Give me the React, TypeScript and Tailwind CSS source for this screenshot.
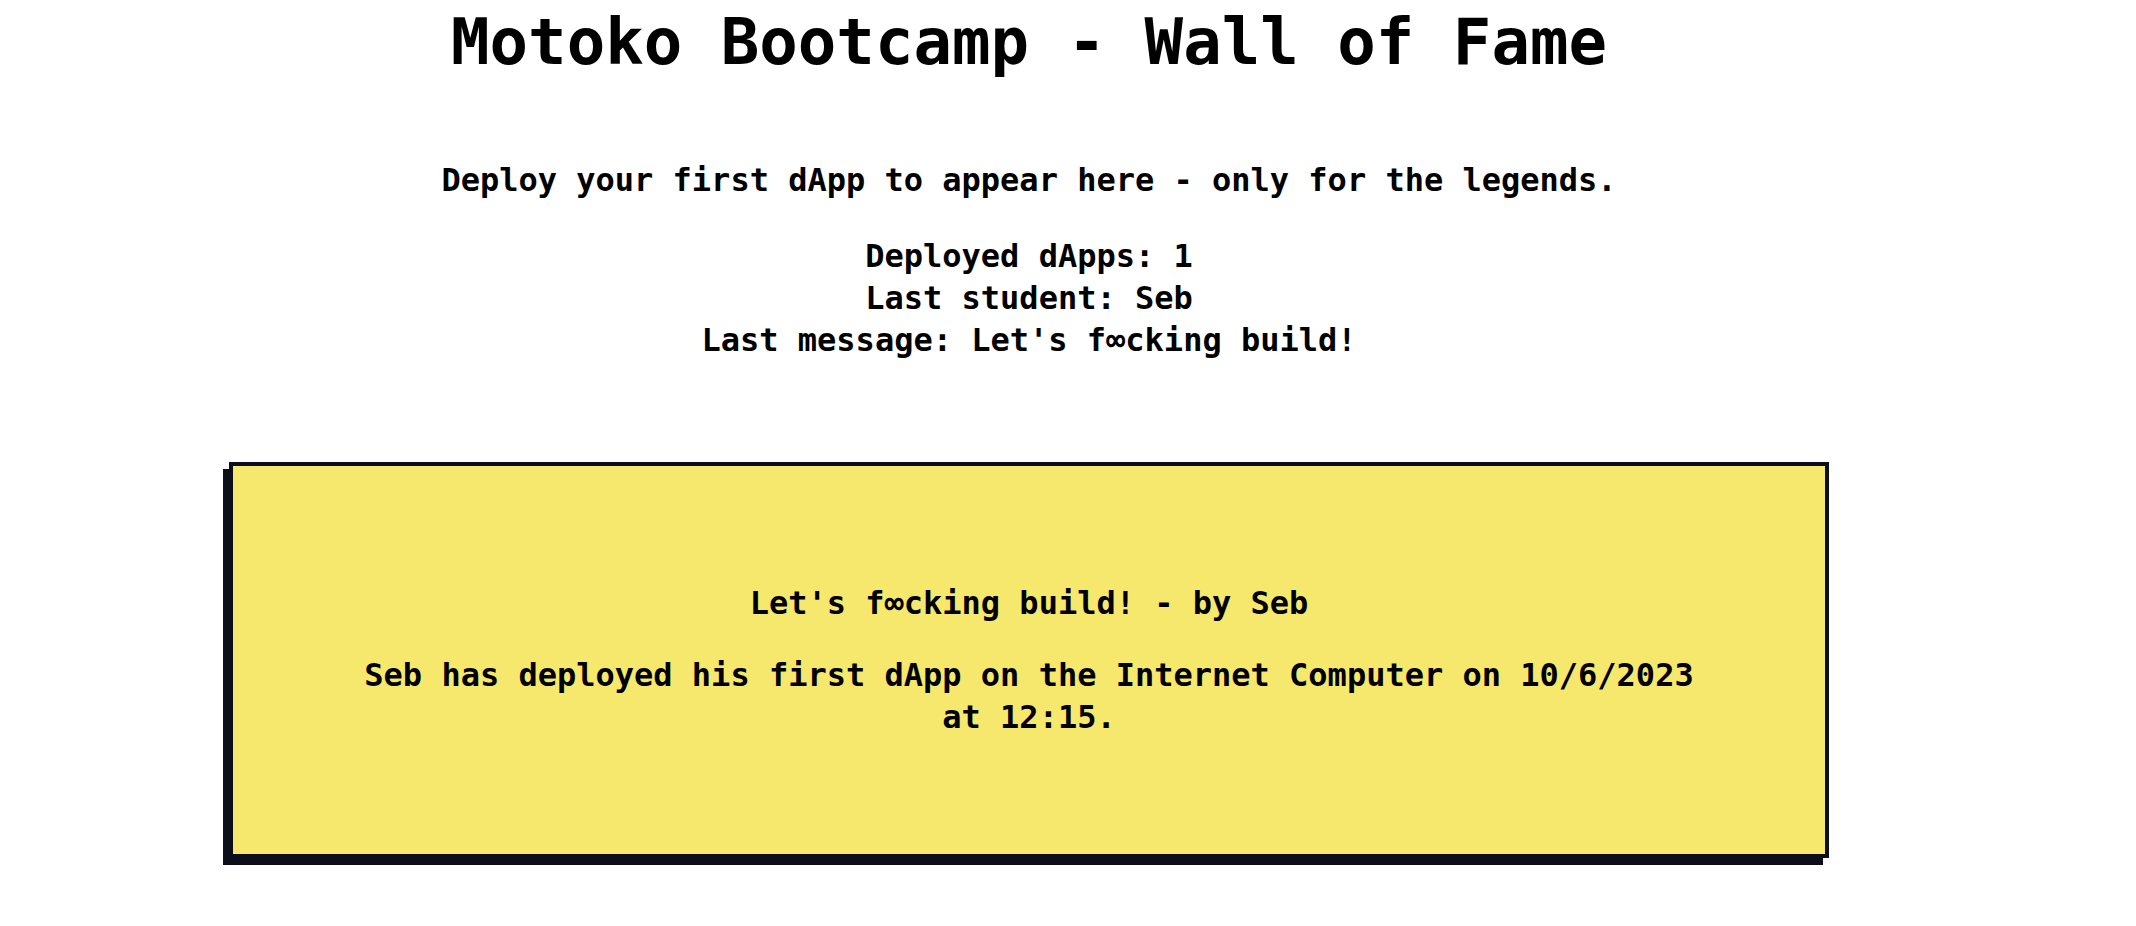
const stats = [
  { label: "Deployed dApps", value: "1" },
  { label: "Last student", value: "Seb" },
  { label: "Last message", value: "Let's f∞cking build!" },
]

export default function App() {
  return (
    <div className="min-h-screen bg-white font-['DejaVu_Sans_Mono',monospace] font-bold text-black">
      <div className="flex w-[2058px] flex-col items-center">
        <h1 className="mt-[4px] text-[64px] leading-[1.2]">Motoko Bootcamp - Wall of Fame</h1>
        <p className="mt-[78px] text-[32px] leading-[42px]">
          Deploy your first dApp to appear here - only for the legends.
        </p>
        <div className="mt-[34px] flex flex-col items-center text-[32px] leading-[42px]">
          {stats.map((s) => (
            <p key={s.label}>
              {s.label}: {s.value}
            </p>
          ))}
        </div>
        <div className="mt-[101px] w-[1600px] border-4 border-[#0c0e1a] bg-[#f6e86c] px-[120px] pt-[116px] pb-[116px] text-center text-[32px] leading-[42px] shadow-[-6px_7px_0_#0c0e1a]">
          <p>Let's f∞cking build! - by Seb</p>
          <p className="mt-[30px]">
            Seb has deployed his first dApp on the Internet Computer on 10/6/2023 at 12:15.
          </p>
        </div>
      </div>
    </div>
  )
}
